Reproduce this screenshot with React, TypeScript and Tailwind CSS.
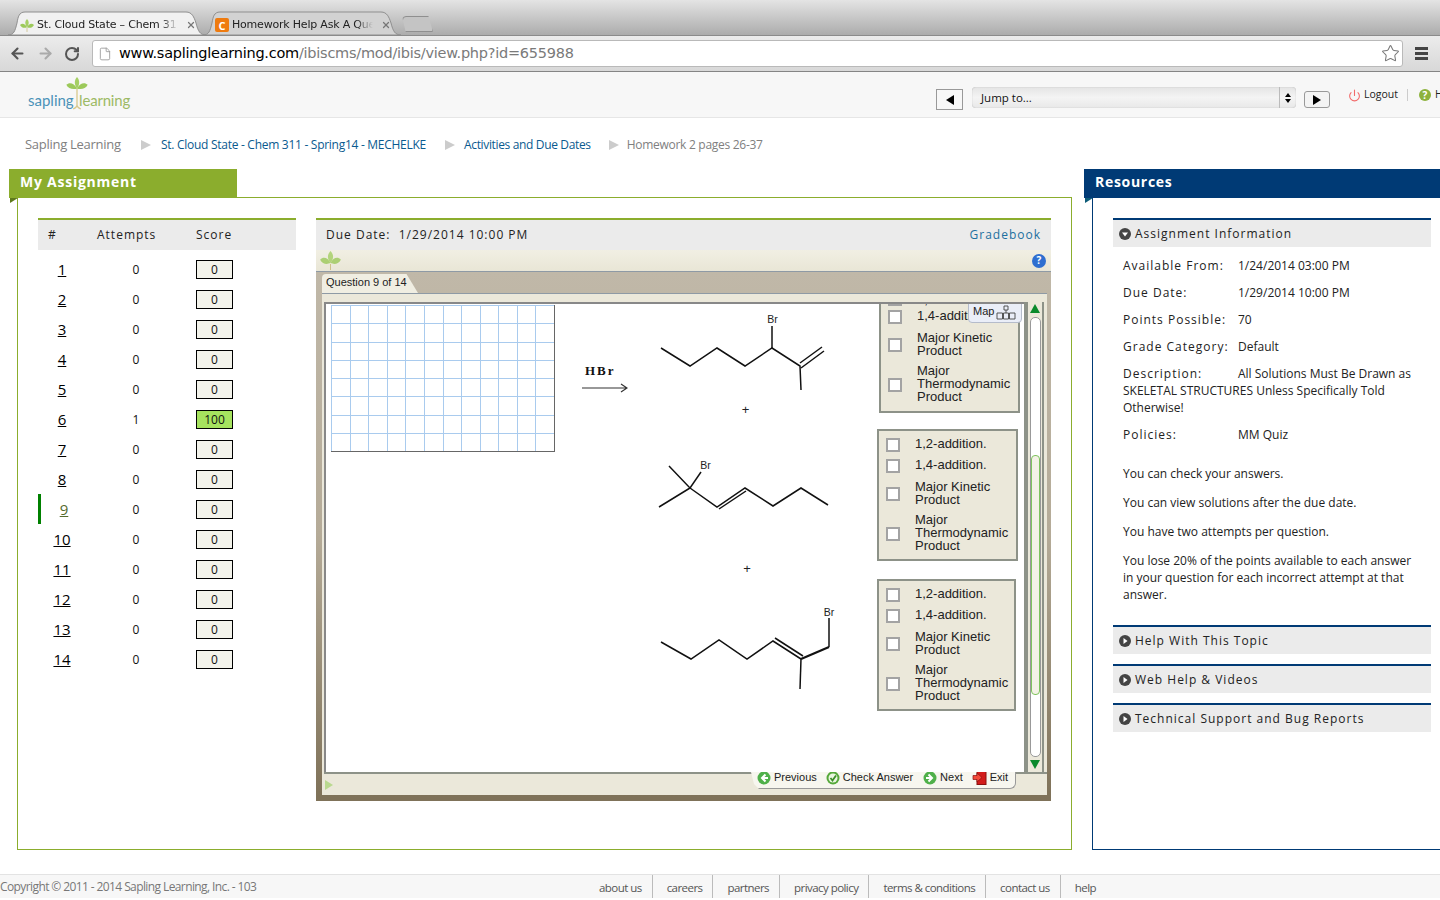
import { ArrowLeft, ArrowRight, RotateCw, File, Star, Power, X } from "lucide-react"

const questions = [
  { n: 1, attempts: 0, score: 0 },
  { n: 2, attempts: 0, score: 0 },
  { n: 3, attempts: 0, score: 0 },
  { n: 4, attempts: 0, score: 0 },
  { n: 5, attempts: 0, score: 0 },
  { n: 6, attempts: 1, score: 100 },
  { n: 7, attempts: 0, score: 0 },
  { n: 8, attempts: 0, score: 0 },
  { n: 9, attempts: 0, score: 0 },
  { n: 10, attempts: 0, score: 0 },
  { n: 11, attempts: 0, score: 0 },
  { n: 12, attempts: 0, score: 0 },
  { n: 13, attempts: 0, score: 0 },
  { n: 14, attempts: 0, score: 0 },
]

const infoRows = [
  ["Available From:", "1/24/2014 03:00 PM"],
  ["Due Date:", "1/29/2014 10:00 PM"],
  ["Points Possible:", "70"],
  ["Grade Category:", "Default"],
]

const footerLinks = ["about us", "careers", "partners", "privacy policy", "terms & conditions", "contact us", "help"]

function Leaf({ className }: { className?: string }) {
  return (
    <svg viewBox="0 0 24 22" className={className}>
      <path d="M12 15V22" stroke="#c9b877" strokeWidth="1.2" />
      <path d="M12 0C16 4 16 9 12 14C8 9 8 4 12 0Z" fill="#a5cf63" />
      <path d="M0 10C4 6 9 8 12 14C7 16 3 15 0 10Z" fill="#9cc95a" />
      <path d="M24 10C20 6 15 8 12 14C17 16 21 15 24 10Z" fill="#9cc95a" />
    </svg>
  )
}

function BrowserTab({ width, active, icon, title }: { width: number; active?: boolean; icon: React.ReactNode; title: string }) {
  const w = width
  return (
    <div className="relative flex h-[24px] items-center pl-[12px] pt-[4px]" style={{ width: w }}>
      <svg className="absolute inset-0" width={w} height={24} viewBox={`0 0 ${w} 24`}>
        <path
          d={`M0 24C6 24 7 20 9 12C10 6 11 1 17 1H${w - 20}C${w - 14} 1 ${w - 12} 6 ${w - 10} 12C${w - 8} 20 ${w - 6} 24 ${w} 24Z`}
          fill={active ? "#f1f1f1" : "#d2d2d2"}
          stroke="#8f8f8f"
        />
      </svg>
      <span className="relative flex h-[14px] w-[14px] items-center justify-center">{icon}</span>
      <span className="relative ml-[3px] w-[141px] overflow-hidden whitespace-nowrap text-[11px] tracking-[-0.2px] text-[#222] [mask-image:linear-gradient(to_right,black_88%,transparent)] font-['DejaVu_Sans',sans-serif]">
        {title}
      </span>
      <X className="relative ml-[8px] h-[10px] w-[10px] text-[#777]" strokeWidth={3} />
    </div>
  )
}

function BrowserChrome() {
  return (
    <div className="shrink-0">
      <div className="flex h-[36px] items-end border-b border-[#8b8b8b] bg-gradient-to-b from-[#e4e4e4] to-[#acacac] pl-[8px]">
        <BrowserTab
          width={198}
          active
          title="St. Cloud State – Chem 311"
          icon={<Leaf className="h-[13px] w-[14px]" />}
        />
        <div className="-ml-[3px]">
          <BrowserTab
            width={198}
            title="Homework Help Ask A Question"
            icon={
              <span className="flex h-[14px] w-[14px] items-center justify-center rounded-[2px] bg-[#ef7b0f] text-[11px] font-bold leading-none text-white">
                C
              </span>
            }
          />
        </div>
        <div className="mb-[3px] ml-[1px] h-[16px] w-[31px] rounded-t-[4px] border border-[#8f8f8f] bg-[#c4c4c4] [clip-path:polygon(0_0,85%_0,100%_100%,12%_100%)]" />
      </div>
      <div className="flex h-[36px] items-center border-b border-[#858585] bg-gradient-to-b from-[#ececec] to-[#d8d8d8]">
        <ArrowLeft className="ml-[9px] h-[17px] w-[17px] text-[#555]" strokeWidth={3} />
        <ArrowRight className="ml-[11px] h-[17px] w-[17px] text-[#aaa]" strokeWidth={3} />
        <RotateCw className="ml-[10px] h-[16px] w-[16px] text-[#555]" strokeWidth={3} />
        <div className="ml-[12px] flex h-[27px] w-[1311px] items-center rounded-[3px] border border-[#b9b9b9] bg-white">
          <File className="ml-[5px] h-[16px] w-[14px] text-[#999]" strokeWidth={1.5} />
          <span className="ml-[7px] pt-[1px] text-[14.5px] tracking-[-0.25px] text-[#7a7a7a] font-['DejaVu_Sans',sans-serif]">
            <span className="text-black">www.saplinglearning.com</span>/ibiscms/mod/ibis/view.php?id=655988
          </span>
          <Star className="ml-auto mr-[2px] h-[19px] w-[19px] text-[#777]" strokeWidth={1.3} />
        </div>
        <div className="ml-[12px] flex w-[13px] flex-col gap-[2px]">
          <div className="h-[3px] bg-[#444]" />
          <div className="h-[3px] bg-[#444]" />
          <div className="h-[3px] bg-[#444]" />
        </div>
      </div>
    </div>
  )
}

function SiteHeader() {
  return (
    <div className="flex h-[46px] shrink-0 items-center overflow-hidden border-b border-[#e6e6e6] bg-[#f7f7f7] pl-[28px]">
      <div className="relative mt-[10px] flex w-[102px] shrink-0 items-end justify-between text-[15px] leading-[20px] font-['Lato',sans-serif]">
        <span className="text-[#4b92b8]">sapling</span>
        <span className="tracking-[-0.2px] text-[#9dba65]">learning</span>
        <svg viewBox="0 0 22 34" className="absolute -top-[13px] left-[38px] h-[33px] w-[22px]">
          <path d="M11 12V31M7 33C9 32 11 31 11 29C11 31 13 32 15 33" stroke="#d8c88a" strokeWidth="1.3" fill="none" />
          <path d="M11 0C14 3 14 8 11 12C8 8 8 3 11 0Z" fill="#a5cf63" />
          <path d="M0 8C3 5 8 6 11 12C6 13 2 12 0 8Z" fill="#9cc95a" />
          <path d="M22 8C19 5 14 6 11 12C16 13 20 12 22 8Z" fill="#9cc95a" />
        </svg>
      </div>
      <div className="ml-[806px] mt-[10px] flex h-[21px] w-[27px] shrink-0 items-center justify-center border border-[#999] bg-[#f7f7f7]">
        <div className="h-0 w-0 border-y-[5px] border-r-[8px] border-y-transparent border-r-black" />
      </div>
      <div className="ml-[9px] mt-[6px] flex h-[21px] w-[324px] shrink-0 items-center rounded-[4px] bg-gradient-to-b from-[#e4e4e4] via-[#f4f4f4] to-[#e8e8e8] shadow-[inset_0_0_1px_#999]">
        <span className="flex-1 pl-[9px] text-[11.5px] text-[#111]">Jump to...</span>
        <div className="flex h-full w-[17px] flex-col items-center justify-center gap-[2px] border-l border-[#bbb]">
          <div className="h-0 w-0 border-x-[3px] border-b-[4px] border-x-transparent border-b-black" />
          <div className="h-0 w-0 border-x-[3px] border-t-[4px] border-x-transparent border-t-black" />
        </div>
      </div>
      <div className="ml-[8px] mt-[10px] flex h-[17px] w-[26px] shrink-0 items-center justify-center rounded-[3px] border border-[#999] bg-[#f4f4f4]">
        <div className="h-0 w-0 border-y-[5px] border-l-[8px] border-y-transparent border-l-black" />
      </div>
      <div className="ml-[18px] flex shrink-0 items-center pt-[1px] text-[10.5px] text-[#222]">
        <Power className="h-[13px] w-[13px] text-[#f26a6a]" strokeWidth={2} />
        <span className="ml-[3px]">Logout</span>
        <div className="ml-[9px] h-[12px] w-px bg-[#ccc]" />
        <span className="ml-[11px] flex h-[12px] w-[12px] items-center justify-center rounded-full bg-[#8db23c] text-[10px] font-bold text-white">?</span>
        <span className="ml-[4px]">Help</span>
      </div>
    </div>
  )
}

function Crumb({ className }: { className: string }) {
  return <div className={`h-0 w-0 border-y-[5px] border-l-[10px] border-y-transparent border-l-[#ccc] ${className}`} />
}

function Breadcrumb() {
  return (
    <div className="flex h-[51px] shrink-0 items-center pl-[25px] pt-[2px] text-[12px] tracking-[-0.28px] text-[#0a5a8f]">
      <span className="w-[97px] text-[13px] text-[#808080]">Sapling Learning</span>
      <Crumb className="ml-[19px] mr-[10px]" />
      <span className="w-[265px]">St. Cloud State - Chem 311 - Spring14 - MECHELKE</span>
      <Crumb className="ml-[19px] mr-[9px]" />
      <span className="tracking-[-0.35px]">Activities and Due Dates</span>
      <Crumb className="ml-[18px] mr-[8px]" />
      <span className="text-[#808080]">Homework 2 pages 26-37</span>
    </div>
  )
}

function AssignmentList() {
  return (
    <div className="w-[258px] shrink-0">
      <div className="flex h-[32px] items-center border-t-2 border-[#8bad2d] bg-[#ebebeb] text-[12px] tracking-[1px] text-[#222]">
        <span className="w-[59px] pl-[10px]">#</span>
        <span className="w-[99px]">Attempts</span>
        <span>Score</span>
      </div>
      <div className="mt-[4px]">
        {questions.map((q) => (
          <div key={q.n} className="relative flex h-[30px] items-center text-[12px] text-[#111]">
            {q.n === 9 && <div className="absolute left-0 top-0 h-full w-[3px] bg-[#008000]" />}
            <span className={`w-[48px] text-center text-[15px] underline ${q.n === 9 ? "pl-[4px] text-[#556b2f]" : "text-black"}`}>
              {q.n}
            </span>
            <span className="w-[100px] pt-[2px] text-center">{q.attempts}</span>
            <span
              className={`ml-[10px] flex h-[19px] w-[37px] items-center justify-center border border-black pt-[1px] ${q.score === 100 ? "bg-[#a6e35f]" : "bg-[#f3f3eb]"}`}
            >
              {q.score}
            </span>
          </div>
        ))}
      </div>
    </div>
  )
}

function Molecules() {
  const bond = { fill: "none", stroke: "#111", strokeWidth: 1.5 }
  const label = { fontFamily: "'Liberation Sans', sans-serif", fontSize: 10.5, fill: "#222", textAnchor: "middle" as const }
  return (
    <svg viewBox="650 302 180 470" className="-mt-[2px] h-[470px] w-[180px] shrink-0 overflow-visible">
      <polyline {...bond} points="661,348 690,366 717,348 745,366 772,348 800,366 801,390" />
      <polyline {...bond} points="772,348 772,326" />
      <polyline {...bond} points="800,363 822,347" />
      <polyline {...bond} points="801,368 824,351" />
      <text x="772.5" y="323" {...label}>Br</text>
      <text x="745.5" y="414" {...label} fontSize={13}>+</text>

      <polyline {...bond} points="669,466 690,488 659,507" />
      <polyline {...bond} points="690,488 701,472" />
      <polyline {...bond} points="690,488 717,507 745,488 773,506 801,488 828,505" />
      <polyline {...bond} points="719,509 746,491" />
      <text x="705.5" y="469" {...label}>Br</text>
      <text x="747" y="573" {...label} fontSize={13}>+</text>

      <polyline {...bond} points="661,642 691,659 719,640 747,659 773,641 801,659" />
      <polyline {...bond} points="775,638 803,656" />
      <polyline {...bond} points="801,659 829,647" strokeWidth={2.2} />
      <polyline {...bond} points="829,647 829,618" />
      <polyline {...bond} points="801,659 800,689" />
      <text x="829" y="616" {...label}>Br</text>
    </svg>
  )
}

function OptionRow({ h, gap, align, children }: { h: number; gap: number; align?: string; children: React.ReactNode }) {
  return (
    <div className={`flex ${align ?? "items-center"}`} style={{ height: h }}>
      <div className="h-[14px] w-[14px] shrink-0 border-2 border-[#a3a3a3] bg-white" />
      <div className="-mt-[2px] text-[13px] leading-[13px] text-[#222]" style={{ marginLeft: gap }}>
        {children}
      </div>
    </div>
  )
}

function OptionBox({ className, gap, firstAlign }: { className: string; gap: number; firstAlign?: string }) {
  return (
    <div className={`shrink-0 border-2 border-[#8d9288] bg-[#ebe8da] pl-[7px] pt-[3px] ${className}`}>
      <OptionRow h={21} gap={gap} align={firstAlign}>1,2-addition.</OptionRow>
      <OptionRow h={21} gap={gap}>1,4-addition.</OptionRow>
      <OptionRow h={35} gap={gap}>Major Kinetic<br />Product</OptionRow>
      <OptionRow h={45} gap={gap}>Major<br />Thermodynamic<br />Product</OptionRow>
    </div>
  )
}

function Scrollbar() {
  return (
    <div className="flex w-[20px] shrink-0 flex-col items-center border-l-[4px] border-r-[2px] border-[#8d9288] bg-[#ebe8da]">
      <div className="mt-[2px] h-0 w-0 border-x-[5px] border-b-[9px] border-x-transparent border-b-[#0a8a2c]" />
      <div className="mt-[4px] flex h-[440px] w-[11px] flex-col rounded-[5px] border border-[#999] bg-white">
        <div className="h-[137px]" />
        <div className="h-[240px] rounded-[4px] border border-[#7ec45e] bg-[#f4f2e6]" />
      </div>
      <div className="mt-[3px] h-0 w-0 border-x-[5px] border-t-[9px] border-x-transparent border-t-[#0a8a2c]" />
    </div>
  )
}

function NavIcon({ kind }: { kind: "prev" | "check" | "next" }) {
  return (
    <svg viewBox="0 0 14 14" className="h-[14px] w-[14px] shrink-0">
      <circle cx="7" cy="7" r="6.5" fill={kind === "check" ? "#55a83a" : "#4fb04a"} />
      {kind === "check" && <circle cx="7" cy="7" r="4.5" fill="#e9f5e0" />}
      {kind === "check" && <path d="M4.5 7L6.5 9.5L10 4.5" stroke="#3d8f2a" strokeWidth="1.8" fill="none" />}
      {kind === "prev" && <path d="M8.5 3.5L5 7L8.5 10.5M5 7H11" stroke="#fff" strokeWidth="2" fill="none" />}
      {kind === "next" && <path d="M5.5 3.5L9 7L5.5 10.5M9 7H3" stroke="#fff" strokeWidth="2" fill="none" />}
    </svg>
  )
}

function QuestionFrame() {
  return (
    <div className="border-b-4 border-[#7f7259] bg-gradient-to-b from-[#c0b8a8] via-[#b5ab98] to-[#7f7259] pb-[2px] font-['Liberation_Sans',sans-serif]">
      <div className="flex h-[21px] items-end pl-[6px]">
        <div className="flex h-[19px] w-[96px] items-center rounded-tl-[4px] bg-[#f0eee2] pb-[2px] pl-[4px] text-[11px] text-[#222] [clip-path:polygon(0_0,88%_0,100%_100%,0_100%)]">
          Question 9 of 14
        </div>
      </div>
      <div className="ml-[6px] mr-[4px] border-t border-[#8e9aa5] bg-[#ebe8da] pl-[2px] pr-[3px]">
        <div className="flex pt-[8px]">
          <div className="relative flex h-[470px] w-[700px] overflow-hidden border-l-2 border-t-2 border-[#888] bg-white">
            <div className="flex w-[324px] shrink-0 items-start">
              <div className="ml-[5px] mt-[1px] grid h-[147px] w-[224px] shrink-0 grid-cols-12 grid-rows-8 border-b border-r border-[#666]">
                {Array.from({ length: 96 }).map((_, i) => (
                  <div key={i} className="border-l border-t border-[#a9cbee]" />
                ))}
              </div>
              <div className="ml-[27px] mt-[60px] shrink-0">
                <div className="pl-[3px] text-[13px] font-bold leading-[14px] tracking-[2px] text-[#111] font-['Liberation_Serif',serif]">HBr</div>
                <svg viewBox="0 0 46 10" className="mt-[5px] h-[10px] w-[46px]">
                  <path d="M0 5H45M39 1L45 5L39 9" stroke="#333" strokeWidth="1.2" fill="none" />
                </svg>
              </div>
            </div>
            <Molecules />
            <div className="-mt-[24px] ml-[47px] flex flex-col">
              <OptionBox className="ml-[2px] h-[133px] w-[141px]" gap={15} firstAlign="items-end" />
              <OptionBox className="mt-[16px] h-[132px] w-[141px]" gap={15} />
              <OptionBox className="mt-[18px] h-[132px] w-[139px]" gap={15} />
            </div>
            <div className="absolute right-[2px] top-[-2px] flex h-[21px] w-[54px] items-center gap-[2px] rounded-b-[4px] border border-[#b5bccb] bg-[#eaeef8] pb-[2px] pl-[4px] text-[11px] text-[#222]">
              Map
              <svg viewBox="0 0 20 15" className="mt-[2px] h-[15px] w-[20px]">
                <path d="M8 1H12V5H8ZM10 5V8M1 8H6.5V14H1ZM7.5 8H12.5V14H7.5ZM13.5 8H19V14H13.5Z" fill="none" stroke="#444" strokeWidth="0.9" />
              </svg>
            </div>
          </div>
          <Scrollbar />
        </div>
        <div className="-mr-[3px] flex h-[18px] items-start justify-between border-t-2 border-[#8d9288] pr-[31px]">
          <div className="ml-[1px] mt-[6px] h-0 w-0 border-y-[5px] border-l-[8px] border-y-transparent border-l-[#b9d98f]" />
          <div className="-mt-[2px] flex h-[17px] w-[265px] items-center rounded-b-[6px] border-b border-r border-[#999] bg-[#f7f6ef] pb-[5px] pl-[6px] text-[11px] text-[#222] [clip-path:polygon(0_0,100%_0,100%_100%,8px_100%,3px_70%)]">
            <NavIcon kind="prev" />
            <span className="ml-[3px]">Previous</span>
            <span className="ml-[9px]"><NavIcon kind="check" /></span>
            <span className="ml-[3px]">Check Answer</span>
            <span className="ml-[10px]"><NavIcon kind="next" /></span>
            <span className="ml-[3px]">Next</span>
            <svg viewBox="0 0 15 15" className="ml-[9px] h-[15px] w-[15px] shrink-0">
              <rect x="5" y="0.5" width="9" height="14" fill="#d21b1b" stroke="#8a1010" />
              <path d="M1 5.5H5V3L10 7.5L5 12V9.5H1Z" fill="#f24a3a" stroke="#8a1010" strokeWidth="0.7" />
            </svg>
            <span className="ml-[3px]">Exit</span>
          </div>
        </div>
        <div className="h-[5px]" />
      </div>
    </div>
  )
}

function QuestionPanel() {
  return (
    <div className="w-[735px] shrink-0">
      <div className="flex h-[32px] items-center justify-between border-t-2 border-[#8bad2d] bg-[#ebebeb] px-[10px] text-[12px] tracking-[1px] text-[#222]">
        <span>Due Date:&nbsp; 1/29/2014 10:00 PM</span>
        <span className="text-[#1c6f9f]">Gradebook</span>
      </div>
      <div className="flex h-[22px] items-center justify-between border-b border-[#8e9aa5] bg-gradient-to-b from-[#f1efe3] to-[#e9e6d6] pl-[3px] pr-[5px]">
        <Leaf className="h-[19px] w-[23px] opacity-80" />
        <span className="flex h-[14px] w-[14px] items-center justify-center rounded-full bg-[#2f6fd0] text-[10px] font-bold text-white">?</span>
      </div>
      <QuestionFrame />
    </div>
  )
}

function SectionHeader({ title, open, className }: { title: string; open?: boolean; className?: string }) {
  return (
    <div className={`flex h-[29px] items-center border-t-2 border-[#003a75] bg-[#ebebeb] pl-[6px] text-[12px] tracking-[1px] text-[#222] ${className ?? ""}`}>
      <svg viewBox="0 0 12 12" className="h-[12px] w-[12px] shrink-0">
        <circle cx="6" cy="6" r="6" fill="#444" />
        {open ? <path d="M3 4.5H9L6 8.5Z" fill="#fff" /> : <path d="M4.5 3V9L8.5 6Z" fill="#fff" />}
      </svg>
      <span className="ml-[4px]">{title}</span>
    </div>
  )
}

function ResourcesPanel() {
  return (
    <div className="relative -mt-px ml-[8px] h-[653px] border-b border-l border-t border-[#003a75] pl-[20px] pt-[20px]">
      <div className="absolute -left-[8px] top-0 h-0 w-0 border-b-[5px] border-l-[8px] border-b-transparent border-l-[#0d5c78]" />
      <div className="w-[318px] text-[12px] leading-[17px] text-[#222]">
        <SectionHeader title="Assignment Information" open />
        <div className="px-[10px]">
          <div className="flex flex-col gap-[10px] pt-[10px]">
            {infoRows.map(([k, v]) => (
              <div key={k} className="flex">
                <span className="w-[115px] shrink-0 tracking-[1px]">{k}</span>
                <span>{v}</span>
              </div>
            ))}
            <div>
              <span className="inline-block w-[115px] tracking-[1px]">Description:</span>
              All Solutions Must Be Drawn as SKELETAL STRUCTURES Unless Specifically Told Otherwise!
            </div>
            <div className="flex">
              <span className="w-[115px] shrink-0 tracking-[1px]">Policies:</span>
              <span>MM Quiz</span>
            </div>
          </div>
          <div className="mt-[22px] flex flex-col gap-[12px]">
            <p>You can check your answers.</p>
            <p>You can view solutions after the due date.</p>
            <p>You have two attempts per question.</p>
            <p>You lose 20% of the points available to each answer in your question for each incorrect attempt at that answer.</p>
          </div>
        </div>
        <SectionHeader title="Help With This Topic" className="mt-[22px]" />
        <SectionHeader title="Web Help & Videos" className="mt-[10px]" />
        <SectionHeader title="Technical Support and Bug Reports" className="mt-[10px]" />
      </div>
    </div>
  )
}

function Footer() {
  return (
    <div className="mt-[24px] flex h-[24px] items-center border-t border-[#e3e3e3] bg-[#f7f7f7] text-[11.5px] tracking-[-0.55px] text-[#777]">
      <span className="w-[589px] shrink-0 pt-[1px] text-[12px] tracking-[-0.6px]">Copyright © 2011 - 2014 Sapling Learning, Inc. - 103</span>
      {footerLinks.map((l, i) => (
        <span
          key={l}
          className={`flex h-full items-center whitespace-nowrap px-[10px] pt-[3px] text-[#555] ${i < footerLinks.length - 1 ? "border-r border-[#bbb]" : ""} ${i > 0 ? "pl-[14px]" : ""}`}
        >
          {l}
        </span>
      ))}
    </div>
  )
}

export default function App() {
  return (
    <div className="flex h-[900px] w-[1440px] flex-col overflow-hidden bg-white font-['Open_Sans',sans-serif]">
      <BrowserChrome />
      <SiteHeader />
      <Breadcrumb />
      <div className="flex shrink-0">
        <div className="ml-[9px] w-[1063px] shrink-0">
          <div className="relative z-10 flex h-[29px] w-[228px] items-center bg-[#8bad2d] pb-[4px] pl-[11px] text-[14px] font-bold tracking-[0.75px] text-white">
            My Assignment
          </div>
          <div className="relative -mt-px ml-[8px] flex h-[653px] gap-[20px] border border-[#8bad2d] pl-[20px] pt-[20px]">
            <div className="absolute -left-[8px] top-0 h-0 w-0 border-b-[5px] border-l-[8px] border-b-transparent border-l-[#5f7a1d]" />
            <AssignmentList />
            <QuestionPanel />
          </div>
        </div>
        <div className="ml-[12px] w-[356px] shrink-0">
          <div className="relative z-10 flex h-[29px] items-center bg-[#003a75] pb-[4px] pl-[11px] text-[14px] font-bold tracking-[0.7px] text-white">
            Resources
          </div>
          <ResourcesPanel />
        </div>
      </div>
      <Footer />
    </div>
  )
}
